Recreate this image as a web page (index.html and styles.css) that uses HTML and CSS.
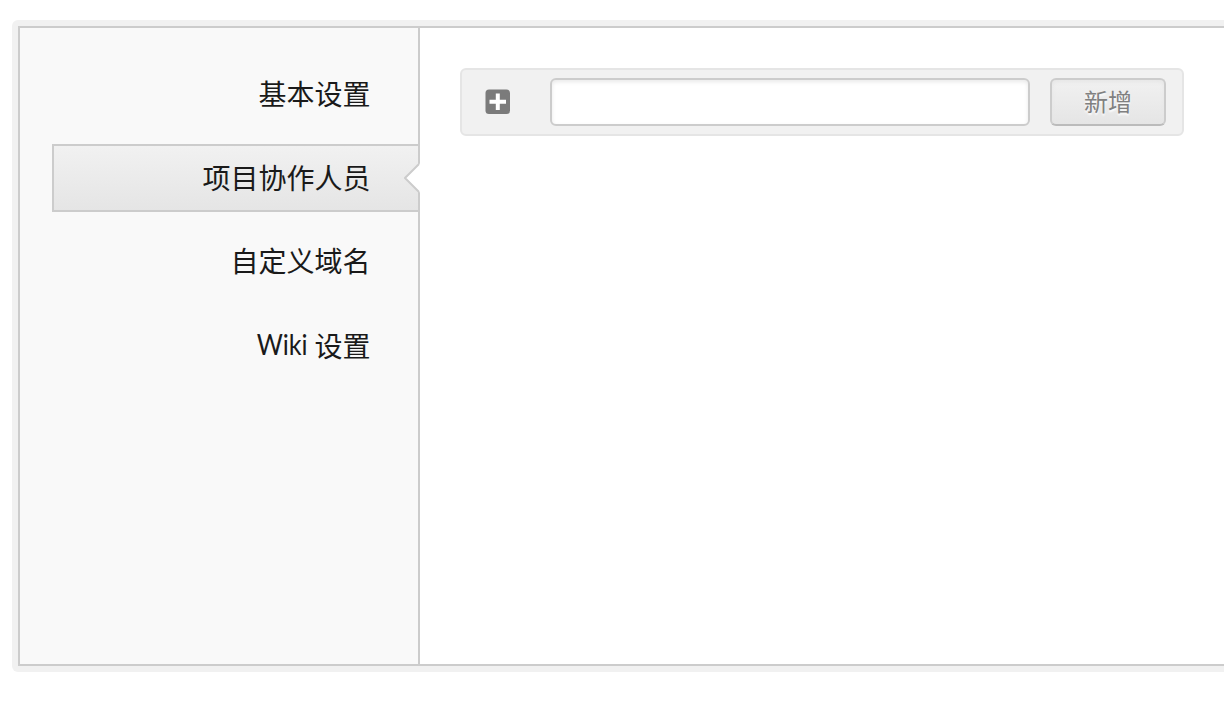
FILE: index.html
```html
<!DOCTYPE html>
<html lang="zh-CN">
<head>
<meta charset="utf-8">
<title>项目协作人员</title>
<link rel="stylesheet" href="styles.css">
</head>
<body>
<div class="frame">
  <div class="panel">
    <nav class="sidebar">
      <a class="item">基本设置</a>
      <a class="item active">项目协作人员
        <svg class="notch" width="16" height="30" viewBox="0 0 16 30"><path d="M16 0.5V29.5L14.5 28.5L1 15L14.5 1.5Z" fill="#fff"/><path d="M15 1L1 15L15 29" fill="none" stroke="#ccc" stroke-width="2"/></svg>
      </a>
      <a class="item raised">自定义域名</a>
      <a class="item"><span class="latin">Wiki</span> 设置</a>
    </nav>
    <main class="content">
      <form class="add-bar">
        <svg class="plus" width="26" height="26" viewBox="0 0 26 26"><rect x="0.5" y="0.5" width="24.5" height="24.5" rx="3.5" fill="#7b7b7b"/><path d="M12.8 4.5V21M4.5 12.8H21" stroke="#fff" stroke-width="4" stroke-linejoin="round"/></svg>
        <input class="field" type="text">
        <button class="add" type="button">新增</button>
      </form>
    </main>
  </div>
</div>
</body>
</html>
```
FILE: styles.css
```css
* { box-sizing: border-box; }
body {
  margin: 0;
  background: #fff;
  overflow: hidden;
  font-family: Lato, "Noto Sans CJK SC", sans-serif;
}
.frame {
  width: 1260px;
  height: 652px;
  margin: 20px 0 0 12px;
  padding: 6px;
  background: #f1f1f1;
  border-radius: 6px;
}
.panel {
  display: flex;
  height: 640px;
  border: 2px solid #ccc;
  background: #fff;
}
.sidebar {
  display: flex;
  flex-direction: column;
  gap: 16px;
  width: 400px;
  padding: 32px 0 0 32px;
  background: #f9f9f9;
  border-right: 2px solid #ccc;
}
.item {
  position: relative;
  height: 68px;
  padding-right: 47.5px;
  border: 2px solid transparent;
  border-right: 0;
  font-size: 28px;
  line-height: 64px;
  text-align: right;
  white-space: nowrap;
  color: #1a1a1a;
}
.raised { line-height: 62px; }
.latin {
  display: inline-block;
  transform: translateY(-2px) scale(0.9, 1.03);
  transform-origin: right center;
}
.active {
  border-color: #ccc;
  background: linear-gradient(#f1f1f1, #e5e5e5);
}
.notch {
  position: absolute;
  top: 17px;
  right: -2px;
}
.content { padding: 40px; }
.add-bar {
  display: flex;
  align-items: center;
  width: 724px;
  height: 68px;
  padding-left: 23px;
  background: #f1f1f1;
  border: 2px solid #e5e5e5;
  border-radius: 6px;
}
.field {
  width: 480px;
  height: 48px;
  margin: 0 20px 0 39px;
  background: #fff;
  border: 2px solid #ccc;
  border-radius: 6px;
  box-shadow: inset 0 2px 4px #e9e9e9;
}
.add {
  width: 116px;
  height: 48px;
  padding: 0 0 3px;
  border: 2px solid #ccc;
  border-bottom-color: #bbb;
  border-radius: 6px;
  background: linear-gradient(#f1f1f1, #e5e5e5);
  box-shadow: inset 0 2px 4px #e5e5e5;
  color: #808080;
  font: 24px/40px "Noto Sans CJK SC", sans-serif;
  text-shadow: 0 2px 2px #fff;
}
```
